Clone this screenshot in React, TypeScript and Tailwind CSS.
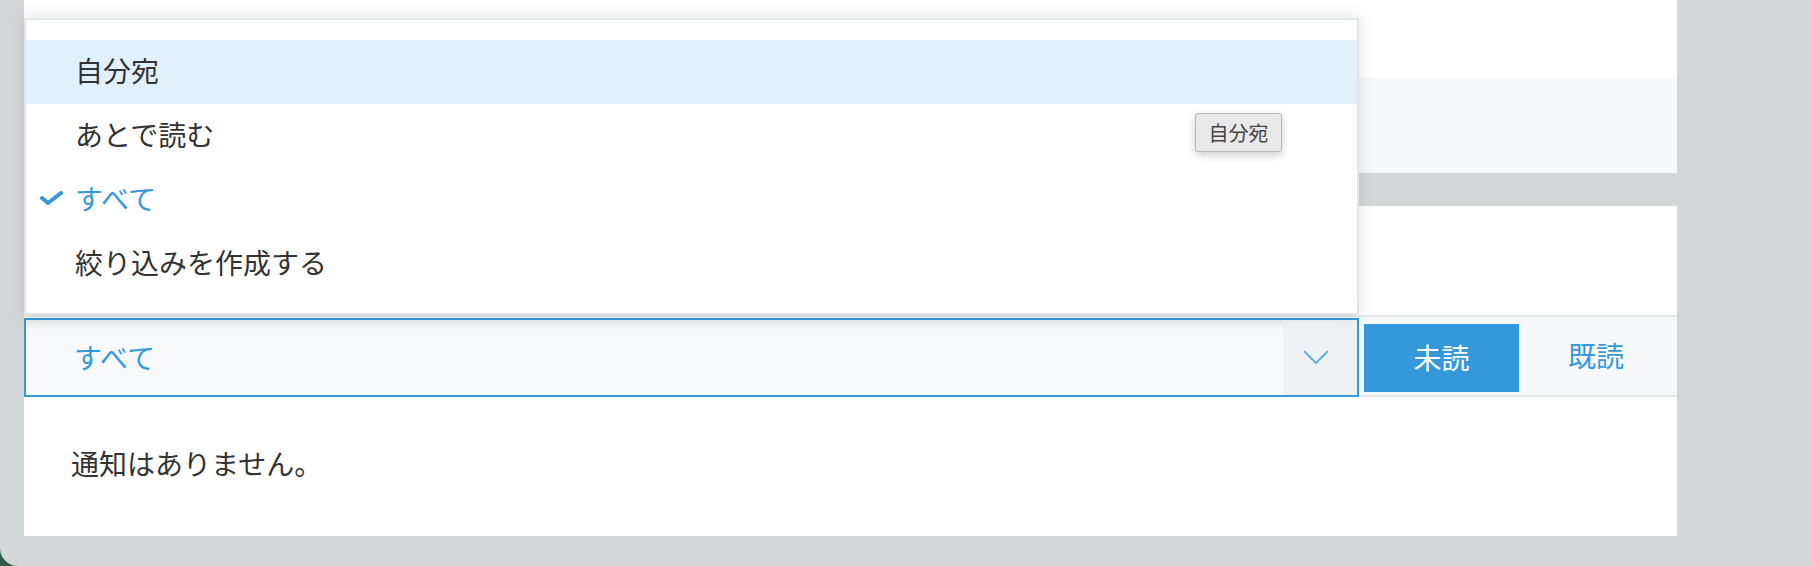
import { useState } from 'react';

const items = ['自分宛', 'あとで読む', 'すべて', '絞り込みを作成する'];

function CheckIcon() {
  return (
    <svg width="23" height="14" viewBox="0 0 23 14" className="absolute left-[14px] top-[23px]">
      <polyline points="2,7 8,12 21,2" fill="none" stroke="#3498db" strokeWidth="4" strokeLinecap="round" strokeLinejoin="round" />
    </svg>
  );
}

function FilterMenu({ selected, hovered }: { selected: string; hovered: string }) {
  return (
    <div className="absolute left-[24px] top-[18px] h-[297px] w-[1335px] border-2 border-[#e1e5e6] bg-white pt-[20px] shadow-[0_0_16px_rgba(0,0,0,0.12)]">
      {items.map((label) => (
        <div
          key={label}
          className={`relative flex h-[64px] items-center pb-[5px] pl-[49px] text-[28px] leading-none ${
            hovered === label ? 'bg-[#e1f0fd]' : ''
          } ${selected === label ? 'text-[#3498db]' : 'text-[#333]'}`}
        >
          {selected === label && <CheckIcon />}
          {label}
        </div>
      ))}
    </div>
  );
}

export default function App() {
  const [selected] = useState('すべて');

  return (
    <div className="relative h-[566px] w-[1812px] overflow-hidden bg-[#2f5c48] font-['Noto_Sans_CJK_JP','Noto_Sans',sans-serif]">
      <div className="flex h-full rounded-bl-[18px] bg-[#d4d7d8]">
        <div className="w-[24px] shrink-0" />
        <div className="flex w-[1653px] shrink-0 flex-col">
          {/* top card */}
          <div className="h-[78px] bg-white" />
          <div className="h-[95px] bg-[#f7f8fa]" />
          <div className="h-[33px]" />

          {/* notifications card */}
          <div className="flex flex-col bg-white">
            <div className="h-[109px]" />
            <div className="flex h-[82px] items-start border-y-2 border-[#e4e6e8] bg-[#f7f8fa]">
              <div className="mt-[1px] flex h-[79px] w-[1335px] shrink-0 border-2 border-[#3498db] bg-[#f7f9fa] shadow-[inset_0_10px_10px_-8px_rgba(0,0,0,0.1)]">
                <div className="flex flex-1 items-center pb-[2px] pl-[48px] text-[28px] leading-none text-[#3498db]">{selected}</div>
                <div className="flex w-[74px] items-center justify-center bg-[#eef2f5] pr-[8px]">
                  <svg width="26" height="15" viewBox="0 0 26 15">
                    <polyline points="1,1 13,13 25,1" fill="none" stroke="#62aee6" strokeWidth="2" />
                  </svg>
                </div>
              </div>
              <button className="ml-[5px] mt-[7px] flex h-[68px] w-[155px] items-center justify-center bg-[#3498db] pb-[2px] text-[28px] leading-none text-white">
                未読
              </button>
              <button className="flex h-[78px] w-[158px] items-center justify-center pb-[2px] pr-[4px] text-[28px] leading-none text-[#3498db]">
                既読
              </button>
            </div>
            <div className="h-[139px] px-[47px] pt-[52px] text-[28px] leading-none text-[#333]">通知はありません。</div>
          </div>
        </div>
      </div>

      <FilterMenu selected={selected} hovered="自分宛" />

      <div className="absolute left-[1195px] top-[113px] flex h-[39px] w-[87px] items-center justify-center rounded-[3px] border border-[#b9b9b9] bg-[#e9e9e9] text-[20px] leading-none text-[#444] shadow-[0_3px_8px_rgba(0,0,0,0.2)]">
        自分宛
      </div>
    </div>
  );
}
